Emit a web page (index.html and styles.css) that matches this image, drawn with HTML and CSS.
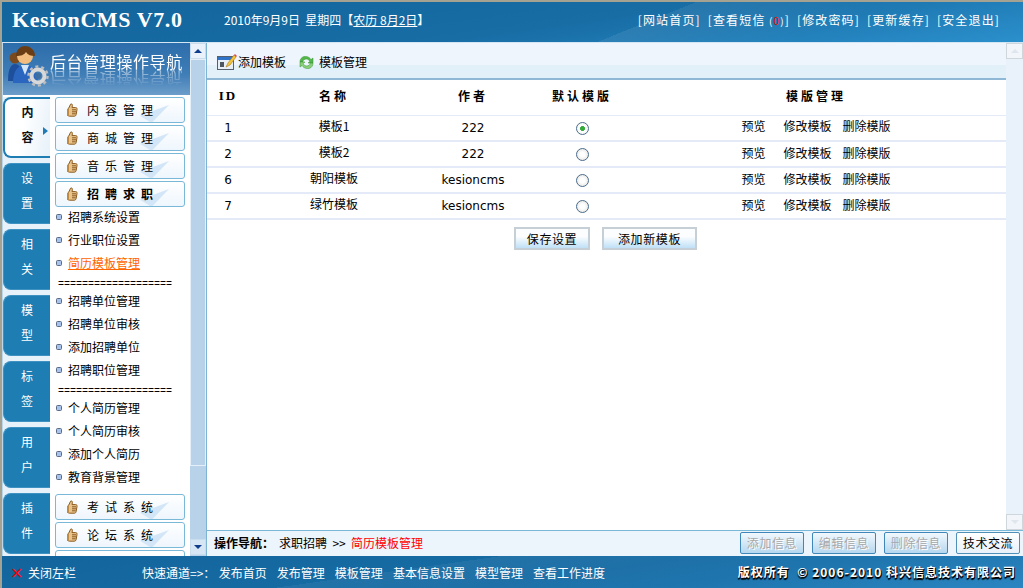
FILE: index.html
```html
<!DOCTYPE html>
<html lang="zh-CN">
<head>
    <meta charset="UTF-8">
    <title>KesionCMS V7.0</title>
    <link rel="stylesheet" href="styles.css">
</head>
<body>
    <svg class="svg-defs" width="0" height="0">
        <symbol id="icon-hand" viewBox="0 0 12 14">
            <path d="M4.6 1.2c1.2-.6 2 .2 1.8 1.4L6 4.6h3.6c1.2 0 1.7.9 1.4 1.9l-.9 5.2c-.2.9-.8 1.5-1.8 1.5H3.600c-1.200 0-1.900-.6-1.900-1.600V6.800c0-.8.4-1.200 1-1.700z" fill="#e8c48c" stroke="#8a5a1e" stroke-width="1"/>
            <path d="M6 6.800h4M6 8.800h4M6 10.800h3.600" stroke="#8a5a1e" stroke-width="1" fill="none"/>
            <rect x="1" y="6" width="2" height="7" fill="#c08a40"/>
        </symbol>
        <symbol id="icon-bullet" viewBox="0 0 6 6">
            <rect x=".5" y=".5" width="5" height="5" rx="1" fill="#a9c4ec" stroke="#5a6b85"/>
        </symbol>
    </svg>

    <div class="admin-page">
        <!-- Top bar -->
        <div class="top-bar">
            <div class="top-logo">KesionCMS V7.0</div>
            <div class="top-date">2010年9月9日&nbsp; 星期四【<a href="#">农历 8月2日</a>】</div>
            <div class="top-links">
                <a href="#">[网站首页]</a>
                <a href="#">[查看短信<small> (<b>0</b>)</small>]</a>
                <a href="#">[修改密码]</a>
                <a href="#">[更新缓存]</a>
                <a href="#">[安全退出]</a>
            </div>
        </div>

        <div class="middle">
            <!-- Left navigation -->
            <div class="side-nav">
                <div class="side-banner">
                    <svg class="banner-icon" width="42" height="42" viewBox="0 0 42 42">
                        <circle cx="7" cy="13" r="5.500" fill="#7a4a1c"/>
                        <path d="M0 36c0-12 3-17 7-17s7 3 8 17z" fill="#1d4f9c"/>
                        <path d="M5 38c0-12 5-18 12-18s13 5 13 18z" fill="#2a66c0"/>
                        <path d="M13 20h8l-4 10z" fill="#d5e6f8"/>
                        <circle cx="17" cy="11" r="8" fill="#f2bd7e"/>
                        <path d="M8 11C8 4 13 1 17 1s10 3 10 10c-4 0-7-1-9-4-2 3-5 4-10 4z" fill="#6b3d14"/>
                        <circle cx="30" cy="31" r="6.500" fill="none" stroke="#d8d8d8" stroke-width="4"/>
                        <circle cx="30" cy="31" r="9.500" fill="none" stroke="#bdbdbd" stroke-width="2.500" stroke-dasharray="3 2.970"/>
                        <circle cx="30" cy="31" r="3" fill="#3e6e9f"/>
                    </svg>
                    <div class="banner-title">后台管理操作导航</div>
                </div>
                <div class="side-body">
                    <div class="side-tabs">
                        <div class="side-tab side-tab-active">内<br>容</div>
                        <div class="side-tab">设<br>置</div>
                        <div class="side-tab">相<br>关</div>
                        <div class="side-tab">模<br>型</div>
                        <div class="side-tab">标<br>签</div>
                        <div class="side-tab">用<br>户</div>
                        <div class="side-tab">插<br>件</div>
                    </div>
                    <div class="side-menu">
                        <div class="menu-head"><svg width="12" height="14"><use href="#icon-hand"/></svg><span>内容管理</span></div>
                        <div class="menu-head"><svg width="12" height="14"><use href="#icon-hand"/></svg><span>商城管理</span></div>
                        <div class="menu-head"><svg width="12" height="14"><use href="#icon-hand"/></svg><span>音乐管理</span></div>
                        <div class="menu-head menu-head-open"><svg width="12" height="14"><use href="#icon-hand"/></svg><span>招聘求职</span></div>
                        <ul class="menu-list">
                            <li><svg width="6" height="6"><use href="#icon-bullet"/></svg>招聘系统设置</li>
                            <li><svg width="6" height="6"><use href="#icon-bullet"/></svg>行业职位设置</li>
                            <li class="menu-current"><svg width="6" height="6"><use href="#icon-bullet"/></svg><a href="#">简历模板管理</a></li>
                            <li class="menu-sep">===================</li>
                            <li><svg width="6" height="6"><use href="#icon-bullet"/></svg>招聘单位管理</li>
                            <li><svg width="6" height="6"><use href="#icon-bullet"/></svg>招聘单位审核</li>
                            <li><svg width="6" height="6"><use href="#icon-bullet"/></svg>添加招聘单位</li>
                            <li><svg width="6" height="6"><use href="#icon-bullet"/></svg>招聘职位管理</li>
                            <li class="menu-sep">===================</li>
                            <li><svg width="6" height="6"><use href="#icon-bullet"/></svg>个人简历管理</li>
                            <li><svg width="6" height="6"><use href="#icon-bullet"/></svg>个人简历审核</li>
                            <li><svg width="6" height="6"><use href="#icon-bullet"/></svg>添加个人简历</li>
                            <li><svg width="6" height="6"><use href="#icon-bullet"/></svg>教育背景管理</li>
                        </ul>
                        <div class="menu-head"><svg width="12" height="14"><use href="#icon-hand"/></svg><span>考试系统</span></div>
                        <div class="menu-head"><svg width="12" height="14"><use href="#icon-hand"/></svg><span>论坛系统</span></div>
                        <div class="menu-head"></div>
                    </div>
                </div>
            </div>

            <!-- Left scrollbar -->
            <div class="side-scroll">
                <div class="side-scroll-btn"><i class="arrow-up"></i></div>
                <div class="side-scroll-thumb"></div>
                <div class="side-scroll-btn side-scroll-down"><i class="arrow-down"></i></div>
            </div>

            <!-- Main content -->
            <div class="content">
                <div class="content-row">
                    <div class="pane">
                        <div class="toolbar">
                            <div class="tool-item">
                                <svg width="20" height="16" viewBox="0 0 20 16">
                                    <rect x=".5" y="2.500" width="16" height="13" fill="#e8eef6" stroke="#55606c"/>
                                    <rect x="1" y="3" width="15" height="3" fill="#2f74c8"/>
                                    <rect x="3" y="8" width="4" height="5" fill="#4c5560"/>
                                    <path d="M9 13l2-4 6-8 2 2-6 8z" fill="#f4c43a" stroke="#a8761a" stroke-width=".6"/>
                                    <path d="M17 1l1-1 2 2-1 1z" fill="#e0485a"/>
                                </svg>
                                添加模板
                            </div>
                            <div class="tool-item tool-item-refresh">
                                <svg width="15" height="15" viewBox="0 0 15 15">
                                    <path d="M1 7C1 3 4 1 7.500 1.500 9.500 1.800 11 3 12 4.500L14 3v5H9l1.800-1.600C10 5 9 4 7.500 4 5.500 4 4 5 3.800 7z" fill="#52b848" stroke="#3a8f34" stroke-width=".5"/>
                                    <path d="M14 8c0 4-3 6-6.500 5.500C5.500 13.200 4 12 3 10.500L1 12V7h5L4.200 8.600C5 10 6 11 7.500 11c2 0 3.500-1 3.700-3z" fill="#8ad07a" stroke="#3a8f34" stroke-width=".5"/>
                                </svg>
                                模板管理
                            </div>
                        </div>
                        <div class="content-body">
                            <table class="template-table">
                                <colgroup>
                                    <col class="col-id"><col class="col-name"><col class="col-author"><col class="col-default"><col>
                                </colgroup>
                                <thead>
                                    <tr>
                                        <th class="th-id">ID</th>
                                        <th>名称</th>
                                        <th>作者</th>
                                        <th>默认模版</th>
                                        <th class="td-manage">模版管理</th>
                                    </tr>
                                </thead>
                                <tbody>
                                    <tr>
                                        <td>1</td><td class="td-name">模板1</td><td>222</td>
                                        <td><input type="radio" name="tpl" checked></td>
                                        <td class="td-manage"><a href="#">预览</a><a href="#">修改模板</a><a href="#">删除模版</a></td>
                                    </tr>
                                    <tr>
                                        <td>2</td><td class="td-name">模板2</td><td>222</td>
                                        <td><input type="radio" name="tpl"></td>
                                        <td class="td-manage"><a href="#">预览</a><a href="#">修改模板</a><a href="#">删除模版</a></td>
                                    </tr>
                                    <tr>
                                        <td>6</td><td class="td-name">朝阳模板</td><td>kesioncms</td>
                                        <td><input type="radio" name="tpl"></td>
                                        <td class="td-manage"><a href="#">预览</a><a href="#">修改模板</a><a href="#">删除模版</a></td>
                                    </tr>
                                    <tr>
                                        <td>7</td><td class="td-name">绿竹模板</td><td>kesioncms</td>
                                        <td><input type="radio" name="tpl"></td>
                                        <td class="td-manage"><a href="#">预览</a><a href="#">修改模板</a><a href="#">删除模版</a></td>
                                    </tr>
                                </tbody>
                            </table>
                            <div class="form-actions">
                                <button class="form-btn form-btn-save">保存设置</button>
                                <button class="form-btn form-btn-add">添加新模板</button>
                            </div>
                        </div>
                    </div>

                    <!-- Right scrollbar -->
                    <div class="page-scroll">
                        <div class="page-scroll-btn"><i class="arrow-up arrow-pale"></i></div>
                        <div class="page-scroll-btn"><i class="arrow-down arrow-pale"></i></div>
                    </div>
                </div>
                <div class="status-bar">
                    <div class="crumbs"><b>操作导航：</b>求职招聘 &nbsp;&gt;&gt;&nbsp; <span class="crumb-current">简历模板管理</span></div>
                    <div class="status-actions">
                        <button class="status-btn" disabled>添加信息</button>
                        <button class="status-btn" disabled>编辑信息</button>
                        <button class="status-btn" disabled>删除信息</button>
                        <button class="status-btn status-btn-on">技术交流</button>
                    </div>
                </div>
            </div>
        </div>

        <!-- Bottom bar -->
        <div class="bottom-bar">
            <a class="close-left" href="#"><span class="close-x">×</span>关闭左栏</a>
            <div class="quick-links">
                <span class="quick-label">快速通道=&gt;：</span>
                <a href="#">发布首页</a>
                <a href="#">发布管理</a>
                <a href="#">模板管理</a>
                <a href="#">基本信息设置</a>
                <a href="#">模型管理</a>
                <a href="#">查看工作进度</a>
            </div>
            <div class="copyright">版权所有 &nbsp;© 2006-2010 科兴信息技术有限公司</div>
        </div>
    </div>
</body>
</html>
```

FILE: styles.css
```css
:root {
    --blue-dark: #12649c;
    --blue-mid: #1e7db2;
    --blue-light: #2b90cc;
    --line-blue: #7ab8d8;
    --row-line: #e4eaf8;
}

* {
    box-sizing: border-box;
    margin: 0;
    padding: 0;
}

body {
    font-family: "Noto Sans CJK SC", "DejaVu Sans", sans-serif;
    font-size: 12px;
    color: #000;
    overflow: hidden;
}

a {
    color: inherit;
    text-decoration: none;
}

.svg-defs {
    display: block;
    height: 0;
}

.admin-page {
    width: 1023px;
    height: 588px;
    display: flex;
    flex-direction: column;
    border-top: 2px solid #a5a292;
    border-left: 2px solid #a5a292;
    background-color: #fff;
}

.top-bar {
    height: 40px;
    flex: none;
    display: flex;
    align-items: center;
    padding-bottom: 4px;
    color: #fff;
    background:
        linear-gradient(158deg, transparent 62%, rgba(255,255,255,.07) 62%, transparent 80%),
        linear-gradient(172deg, #12649c 0%, #186da5 55%, #2b90cc 100%);
}

.top-logo {
    width: 222px;
    padding-left: 10px;
    font-family: "Liberation Serif", serif;
    font-size: 22px;
    font-weight: bold;
    letter-spacing: .6px;
}

.top-date {
    line-height: 16px;
}

.top-date a {
    text-decoration: underline;
}

.top-links {
    margin-left: auto;
    margin-right: 23px;
    display: flex;
    gap: 7px;
    line-height: 16px;
    letter-spacing: 1.15px;
}

.top-links small {
    font-size: 10px;
}

.top-links b {
    color: #f00;
    font-weight: normal;
}

.middle {
    flex: 1;
    display: flex;
    min-height: 0;
    border-top: 1px solid #d4e6f3;
}

.side-nav {
    width: 188px;
    flex: none;
    display: flex;
    flex-direction: column;
    border-left: 1px solid #bcd7ea;
    overflow: hidden;
}

.side-banner {
    height: 52px;
    flex: none;
    display: flex;
    padding: 2px 0 0 5px;
    color: #fff;
    background: linear-gradient(#2c6dab, #3f7db6 60%, #6c9dca);
    overflow: hidden;
}

.banner-icon {
    flex: none;
}

.banner-title {
    margin-top: 6px;
    height: 20px;
    font-size: 16px;
    line-height: 20px;
    letter-spacing: .6px;
    white-space: nowrap;
    -webkit-box-reflect: below -2px linear-gradient(transparent 15%, rgba(255,255,255,.6));
}

.side-body {
    flex: 1;
    display: flex;
    min-height: 0;
    padding-top: 2px;
}

.side-tabs {
    width: 47px;
    flex: none;
    background-color: #e6f1f9;
}

.side-tab {
    height: 61px;
    margin-bottom: 5px;
    padding-bottom: 8px;
    display: flex;
    align-items: center;
    justify-content: center;
    text-align: center;
    line-height: 25px;
    color: #fff;
    background-color: var(--blue-mid);
    border: 1px solid #3d92c2;
    border-right: none;
    border-radius: 8px 0 0 8px;
}

.side-tab-active {
    position: relative;
    font-weight: bold;
    color: #111;
    background: linear-gradient(100deg, #fff 40%, #e6f1f9);
    border: 2px solid var(--blue-mid);
    border-right: none;
}

.side-tab-active::after {
    content: "";
    position: absolute;
    right: 2px;
    top: 28px;
    border-left: 5px solid #1f7ab5;
    border-top: 4px solid transparent;
    border-bottom: 4px solid transparent;
}

.side-menu {
    flex: 1;
    padding: 0 5px;
    background-color: #fff;
}

.menu-head {
    position: relative;
    height: 26px;
    margin-bottom: 2px;
    display: flex;
    align-items: center;
    padding-left: 10px;
    border: 1px solid var(--line-blue);
    border-radius: 3px;
    background: linear-gradient(#fff, #eef6fd);
    overflow: hidden;
}

.menu-head::after {
    content: "";
    position: absolute;
    left: 84px;
    top: 7px;
    width: 29px;
    height: 18px;
    background-color: #d3e6f7;
    clip-path: polygon(0 60%, 100% 0, 40% 100%);
}

.menu-head span {
    position: relative;
    z-index: 1;
    margin-left: 9px;
    letter-spacing: 6px;
    line-height: 16px;
    white-space: nowrap;
}

.menu-head-open span {
    font-weight: bold;
}

.menu-list {
    list-style: none;
    margin-top: -4px;
    padding: 0 0 6px 1px;
}

.menu-list li {
    height: 23px;
    display: flex;
    align-items: center;
    gap: 6px;
    line-height: 16px;
}

.menu-current a {
    color: #f60;
    text-decoration: underline;
}

.menu-list .menu-sep {
    height: 16px;
    padding-left: 2px;
    font-family: "Liberation Mono", monospace;
    font-size: 10px;
    line-height: 16px;
    margin-top: 3px;
    margin-bottom: -4px;
}

.side-scroll {
    width: 17px;
    flex: none;
    display: flex;
    flex-direction: column;
    background-color: #b8d3e9;
    border-right: 1px solid #7fb3d3;
}

.side-scroll-btn {
    height: 16px;
    flex: none;
    display: flex;
    align-items: center;
    justify-content: center;
    background-color: #e9f2fa;
    border: 1px solid #c9dded;
}

.side-scroll-down {
    margin-top: auto;
    margin-bottom: 1px;
    background-color: #d6e6f4;
}

.side-scroll-thumb {
    height: 407px;
    border: 1px solid #e4eff8;
    background-color: #b8d3e9;
}

.arrow-up {
    display: block;
    border-left: 4px solid transparent;
    border-right: 4px solid transparent;
    border-bottom: 4px solid #103c8c;
}

.arrow-down {
    display: block;
    border-left: 4px solid transparent;
    border-right: 4px solid transparent;
    border-top: 4px solid #103c8c;
}

.arrow-pale {
    border-top-color: #dfe6ee;
    border-bottom-color: #dfe6ee;
}

.content {
    flex: 1;
    min-width: 0;
    display: flex;
    flex-direction: column;
}

.content-row {
    flex: 1;
    min-height: 0;
    display: flex;
}

.pane {
    flex: 1;
    min-width: 0;
    display: flex;
    flex-direction: column;
}

.toolbar {
    height: 37px;
    flex: none;
    display: flex;
    align-items: center;
    padding: 3px 0 0 10px;
    background: linear-gradient(#eef5fd 62%, #e2f0fa 62%);
    border-bottom: 2px solid #8fb8d6;
}

.tool-item {
    display: flex;
    align-items: center;
    gap: 1px;
    line-height: 16px;
}

.tool-item-refresh {
    margin-left: 13px;
    gap: 5px;
}

.content-body {
    flex: 1;
    min-height: 0;
    background-color: #fff;
}

.template-table {
    width: 100%;
    table-layout: fixed;
    border-collapse: collapse;
}

.col-id {
    width: 42px;
}

.col-name {
    width: 170px;
}

.col-author {
    width: 108px;
}

.col-default {
    width: 110px;
}

.template-table th {
    height: 35px;
    padding-bottom: 3px;
    font-weight: bold;
    letter-spacing: 3px;
    border-bottom: 1px solid var(--row-line);
}

.template-table .th-id {
    font-family: "Liberation Serif", serif;
    font-size: 13px;
    letter-spacing: 2px;
}

.template-table td {
    height: 26px;
    text-align: center;
    font-family: "DejaVu Sans", "Noto Sans CJK SC", sans-serif;
    border-bottom: 2px solid var(--row-line);
}

.template-table .td-name {
    padding-bottom: 5px;
    font-family: "Noto Sans CJK SC", sans-serif;
}

.template-table .td-manage {
    padding-right: 11px;
}

.template-table td.td-manage {
    padding-bottom: 4px;
    font-family: "Noto Sans CJK SC", sans-serif;
}

.td-manage a {
    margin-left: 11px;
    line-height: 16px;
}

.td-manage a:first-child {
    margin-left: 0;
    margin-right: 7px;
}

input[type="radio"] {
    appearance: none;
    display: block;
    width: 13px;
    height: 13px;
    margin: 1px auto 0;
    border: 1px solid #4b6d8d;
    border-radius: 50%;
    background: radial-gradient(circle, #fff 30%, #dcdcd8);
}

input[type="radio"]:checked {
    background: radial-gradient(circle, #34a93c 28%, #fff 34%, #eef3ee);
}

.form-actions {
    display: flex;
    justify-content: flex-start;
    gap: 12px;
    padding: 7px 0 0 307px;
}

.form-btn {
    height: 23px;
    font-family: inherit;
    font-size: 12px;
    line-height: 16px;
    letter-spacing: .6px;
    border: 2px solid #c6cfd6;
    background: linear-gradient(#fbfdff 40%, #bfe0f6);
}

.form-btn-save {
    width: 76px;
}

.form-btn-add {
    width: 95px;
}

.status-bar {
    height: 26px;
    flex: none;
    display: flex;
    align-items: center;
    justify-content: space-between;
    padding: 0 3px 1px 7px;
    background-color: #ecf4fc;
    border-top: 1px solid var(--line-blue);
}

.crumbs {
    line-height: 16px;
}

.crumbs b {
    margin-right: 5px;
}

.crumb-current {
    color: #f00;
}

.status-actions {
    display: flex;
    gap: 8px;
}

.status-btn {
    width: 64px;
    height: 22px;
    font-family: inherit;
    font-size: 12px;
    line-height: 16px;
    letter-spacing: .6px;
    color: #000;
    border: 1px solid #3f87b8;
    border-radius: 2px;
    background: linear-gradient(#f2f8fd, #b5d7ef);
}

.status-btn:disabled {
    color: #a8a8a8;
    text-shadow: 1px 1px 0 #fff;
}

.status-btn-on {
    background: linear-gradient(#ffffff, #e8f1f9);
    border-color: #4f8fb8;
}

.page-scroll {
    width: 17px;
    flex: none;
    display: flex;
    flex-direction: column;
    justify-content: space-between;
    background-color: #e9f1fb;
}

.page-scroll-btn {
    height: 16px;
    display: flex;
    align-items: center;
    justify-content: center;
    background-color: #f2f5f9;
    border: 1px solid #cfd6dc;
}

.bottom-bar {
    height: 32px;
    flex: none;
    display: flex;
    align-items: center;
    padding-top: 2px;
    color: #fff;
    background:
        linear-gradient(172deg, transparent 40%, rgba(255,255,255,.05) 40%, transparent 70%),
        linear-gradient(172deg, #12649c 0%, #186da5 55%, #2b85c0 100%);
}

.close-left {
    width: 140px;
    padding-left: 8px;
    display: flex;
    align-items: center;
    line-height: 16px;
}

.close-x {
    width: 18px;
    color: #f00;
    font-family: "DejaVu Sans", sans-serif;
    font-size: 16px;
}

.quick-links {
    display: flex;
    gap: 10px;
    line-height: 16px;
}

.quick-label {
    margin-right: -6.500px;
}

.copyright {
    margin-left: auto;
    margin-right: 7px;
    margin-bottom: 2px;
    font-weight: bold;
    line-height: 16px;
    letter-spacing: 1px;
    text-shadow: 1px 1px 0 #000, 0 2px 1px #000;
}
```
